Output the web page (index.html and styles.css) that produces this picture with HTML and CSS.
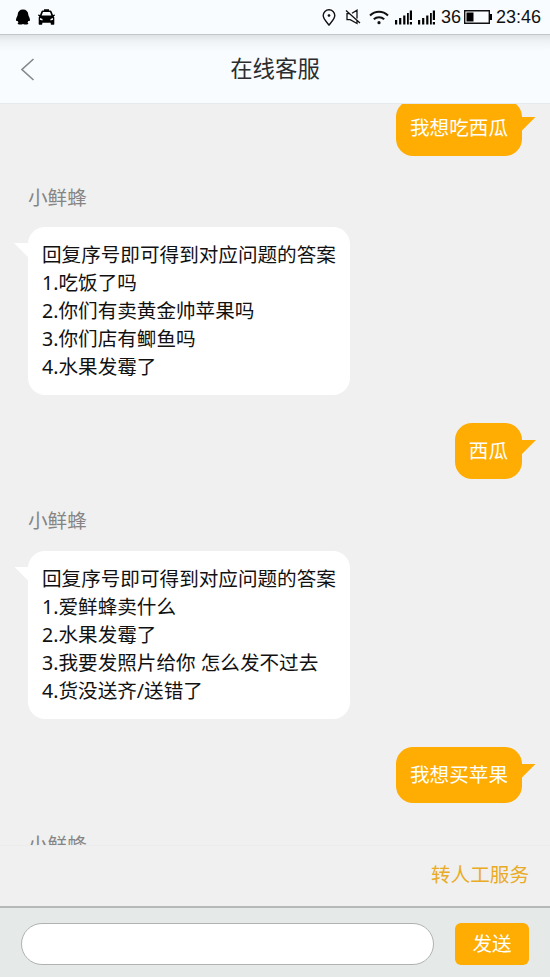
FILE: index.html
```html
<!DOCTYPE html>
<html lang="zh-CN">
<head>
    <meta charset="UTF-8">
    <meta name="viewport" content="width=device-width, initial-scale=1.0">
    <title>在线客服</title>
    <link rel="stylesheet" href="styles.css">
</head>
<body>

    <div class="status-bar">
        <div class="status-left">
            <svg width="14" height="16" viewBox="0 0 14 16">
                <path d="M7 .5C3.800 .5 1.800 2.500 1.700 5.500L1.400 7C.5 8.500 0 10 0 11.300c0 .8.700 1 1.700.6.100.6.400 1.100.8 1.600-.6.300-.8.500-.8.900 0 .8 1 1.100 2.400 1.100 1.200 0 2-.2 2.900-.6.900.4 1.700.6 2.900.6 1.400 0 2.400-.3 2.400-1.100 0-.4-.2-.6-.8-.9.400-.5.700-1 .8-1.600 1 .4 1.700.2 1.700-.6 0-1.300-.5-2.800-1.400-4.300l-.3-1.500C12.200 2.500 10.200 .5 7 .5z"/>
            </svg>
            <svg width="17" height="16" viewBox="0 0 17 16">
                <path fill-rule="evenodd" d="M6 .3h5v1.200h1.300c.6 0 1 .3 1.200.8L15 6l1.700-.4.300 1-1.300.6.600 1.200v6.600c0 .4-.2.700-.6.700h-2.300c-.4 0-.7-.3-.7-.7V13.700H4.300V15c0 .4-.3.700-.7.700H1.300c-.4 0-.6-.3-.6-.7V8.400l.6-1.200L0 6.600l.3-1L2 6l1.500-3.700c.2-.5.600-.8 1.200-.8H6zM5 3L3.600 6.600h9.800L12 3zM2 9v1.800l2.500.7v-1.400zM15 9v1.800l-2.500.7v-1.400z"/>
            </svg>
        </div>
        <div class="status-right">
            <svg class="icon-pin" width="14" height="17" viewBox="0 0 14 17" fill="none" stroke="#111" stroke-width="1.400">
                <path d="M7 16C4.500 12.800 1.200 9.800 1.200 6.500a5.800 5.800 0 0 1 11.600 0C12.800 9.800 9.500 12.800 7 16z"/>
                <circle cx="7" cy="6.500" r="1.100" fill="#111" stroke-width=".6"/>
            </svg>
            <svg class="icon-mute" width="16" height="16" viewBox="0 0 16 16" fill="none" stroke="#111" stroke-width="1.300">
                <path d="M1 1.500l14 12.500M4.200 4.700H2v6h3.200l6.800 3.800v-3M7 4.200l5-3v8.300"/>
            </svg>
            <svg class="icon-wifi" width="20" height="15" viewBox="0 0 20 15" fill="none" stroke="#111" stroke-width="2">
                <path d="M1 5.500c5.200-5 12.800-5 18 0M4.800 9.300c3-2.900 7.400-2.900 10.400 0"/>
                <circle cx="10" cy="12.700" r="1.600" fill="#111" stroke="none"/>
            </svg>
            <svg class="icon-signal" width="17" height="15" viewBox="0 0 17 15">
                <path d="M0 10h2.200v4.500H0zM4.100 8h2.200v6.500H4.100zM8.200 5.500h2.200v9H8.200zM12 3h1.800v11.500H12zM14.800 .5H17v9.500h-2.200zM14.800 12H17v2.500h-2.200z"/>
            </svg>
            <svg class="icon-signal" width="17" height="15" viewBox="0 0 17 15">
                <path d="M0 10h2.200v4.500H0zM4.100 8h2.200v6.500H4.100zM8.200 5.500h2.200v9H8.200zM12 3h1.800v11.500H12zM14.800 .5H17v9.500h-2.200zM14.800 12H17v2.500h-2.200z"/>
            </svg>
            <span class="battery-text">36</span>
            <svg class="icon-battery" width="28" height="14" viewBox="0 0 28 14">
                <path d="M.7.700h24.600v12.600H.7z" fill="none" stroke="#111" stroke-width="1.400"/>
                <path d="M2.500 2.500h7v9h-7zM25.500 4H28v6h-2.500z"/>
            </svg>
            <span class="clock">23:46</span>
        </div>
    </div>

    <div class="header">
        <svg class="back" width="14" height="23" viewBox="0 0 14 23" fill="none" stroke="#858988" stroke-width="1.600">
            <path d="M12.500 1L1 11.500 12.500 22"/>
        </svg>
        <h1>在线客服</h1>
    </div>

    <div class="chat">
        <div class="bubble mine">我想吃西瓜</div>

        <div class="name">小鲜蜂</div>
        <div class="bubble">
            回复序号即可得到对应问题的答案<br>
            1.吃饭了吗<br>
            2.你们有卖黄金帅苹果吗<br>
            3.你们店有鲫鱼吗<br>
            4.水果发霉了
        </div>

        <div class="bubble mine">西瓜</div>

        <div class="name">小鲜蜂</div>
        <div class="bubble">
            回复序号即可得到对应问题的答案<br>
            1.爱鲜蜂卖什么<br>
            2.水果发霉了<br>
            3.我要发照片给你 怎么发不过去<br>
            4.货没送齐/送错了
        </div>

        <div class="bubble mine">我想买苹果</div>

        <div class="name">小鲜蜂</div>
    </div>

    <div class="transfer">
        <a class="transfer-link">转人工服务</a>
    </div>

    <div class="composer">
        <input type="text" class="message-input">
        <button class="btn-send">发送</button>
    </div>

</body>
</html>
```

FILE: styles.css
```css
* {
    box-sizing: border-box;
}
body {
    margin: 0;
    height: 977px;
    display: flex;
    flex-direction: column;
    overflow: hidden;
    background: #f0f0f0;
    color: #111;
    font-family: "Noto Sans", "Noto Sans CJK SC", sans-serif;
    font-size: 19.6px;
    line-height: 28px;
}
svg {
    display: block;
    flex: none;
}

/* status bar */
.status-bar {
    flex: none;
    height: 35px;
    padding: 0 9px 0 16px;
    display: flex;
    justify-content: space-between;
    align-items: center;
    background: #f9fcfe;
    border-bottom: 1px solid #c3c6c8;
}
.status-left, .status-right {
    display: flex;
    align-items: center;
}
.status-left {
    gap: 8px;
}
.status-right {
    font-family: "Liberation Sans", Arial, sans-serif;
    font-size: 18px;
}
.icon-mute {
    margin-left: 9px;
}
.icon-wifi {
    margin-left: 8px;
}
.icon-signal {
    margin-left: 6px;
}
.battery-text {
    margin-left: 6px;
}
.icon-battery {
    margin: 0 4px 0 3px;
}

/* title bar */
.header {
    flex: none;
    height: 68px;
    padding: 0 21px;
    display: grid;
    grid-template-columns: 14px 1fr 14px;
    align-items: center;
    background: linear-gradient(#dfe3e6, #eff2f5 6px, #f8fcff 16px);
}
.header h1 {
    margin: 0;
    font-size: 22.4px;
    font-weight: normal;
    text-align: center;
    color: #2b2d2e;
}

/* messages */
.chat {
    flex: 1;
    min-height: 0;
    padding: 0 28px;
    display: flex;
    flex-direction: column;
    align-items: flex-start;
    overflow: hidden;
    border-top: 1px solid #e6e9e9;
}
.bubble {
    position: relative;
    flex: none;
    padding: 14px;
    margin-bottom: 28px;
    border-radius: 17px;
    background: #fff;
    white-space: nowrap;
}
.bubble::before {
    content: "";
    position: absolute;
    left: -14px;
    top: 16px;
    width: 15px;
    height: 15px;
    background: #fff;
    clip-path: polygon(0 0, 100% 0, 100% 100%);
}
.mine {
    align-self: flex-end;
    background: #ffac03;
    color: #fff;
}
.mine::before {
    left: auto;
    right: -14px;
    top: 17px;
    background: #ffac03;
    clip-path: polygon(0 0, 100% 0, 0 100%);
}
.mine:first-child {
    margin-top: -4.4px;
}
.name {
    flex: none;
    margin-bottom: 15.5px;
    color: #858585;
}

/* bottom area */
.transfer {
    flex: none;
    height: 61px;
    padding: 0 21px 2px;
    display: flex;
    justify-content: flex-end;
    align-items: center;
    border-top: 1px solid #ececec;
}
.transfer-link {
    color: #e9ab25;
}
.composer {
    flex: none;
    height: 71px;
    padding: 3px 21px 0;
    display: flex;
    align-items: center;
    gap: 21px;
    background: #e5e9e8;
    border-top: 2px solid #b5b9b8;
}
.message-input {
    flex: 1;
    min-width: 0;
    height: 42px;
    padding: 0 20px;
    border: 1px solid #afb2b1;
    border-radius: 21px;
    background: #fff;
    font: inherit;
    outline: none;
}
.btn-send {
    width: 74px;
    height: 42px;
    padding: 0;
    border: none;
    border-radius: 6px;
    background: #ffac03;
    color: #fff;
    font: inherit;
    cursor: pointer;
}
```
